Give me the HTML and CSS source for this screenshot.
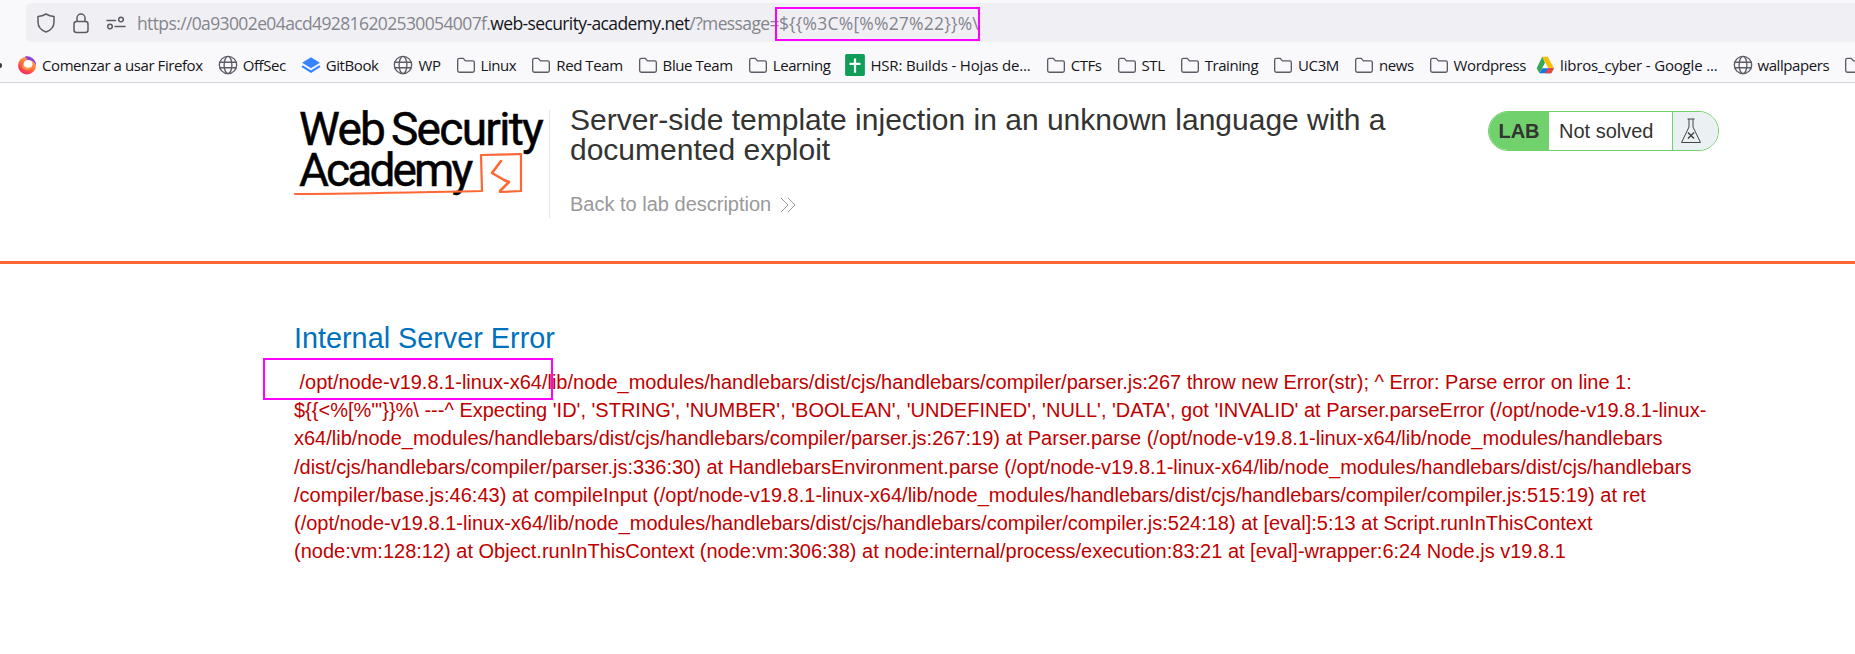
FILE: index.html
```html
<!DOCTYPE html>
<html lang="en">
<head>
    <meta charset="UTF-8">
    <meta name="viewport" content="width=device-width, initial-scale=1.0">
    <title>Server-side template injection</title>
    <link rel="stylesheet" href="styles.css">
</head>
<body>
    <div class="browser">
        <div class="toolbar">
            <div class="urlbar">
                <svg class="url-icon" width="20" height="22" viewBox="0 0 20 22"><path d="M10 2C12.500 3.500 15 4.300 18 4.500V10c0 5-3.300 8.300-8 10C5.300 18.300 2 15 2 10V4.500C5 4.300 7.500 3.500 10 2Z" fill="none" stroke="#5b5b66" stroke-width="1.500" stroke-linejoin="round"/></svg>
                <svg class="url-icon" width="18" height="22" viewBox="0 0 18 22"><path d="M5 9.500V6a4 4 0 0 1 8 0v3.500" fill="none" stroke="#5b5b66" stroke-width="1.500"/><rect x="2" y="9.500" width="14" height="11" rx="2.500" fill="none" stroke="#5b5b66" stroke-width="1.500"/></svg>
                <svg class="url-icon" width="20" height="14" viewBox="0 0 20 14"><g fill="none" stroke="#5b5b66" stroke-width="1.500" stroke-linecap="round"><circle cx="15" cy="3.500" r="2.300"/><circle cx="4" cy="10.500" r="2.300"/><path d="M1 4.500h8.500M9 10.500h10"/></g></svg>
                <div class="url"><span class="url-dim">https://0a93002e04acd492816202530054007f.</span>web-security-academy.net<span class="url-dim">/?message=<span class="url-query">${{%3C%[%%27%22}}%\</span></span></div>
            </div>
        </div>
        <div class="bookmarks">
            <span class="clipped"></span>
            <div class="bookmark"><svg width="20" height="20" viewBox="0 0 20 20"><defs><linearGradient id="fox" x1="0.800" y1="0" x2="0.200" y2="1"><stop offset="0" stop-color="#ffbd4f"/><stop offset="0.500" stop-color="#ff7139"/><stop offset="1" stop-color="#f5156c"/></linearGradient></defs><circle cx="10" cy="10.500" r="9" fill="url(#fox)"/><path d="M8 1.500C13 .5 19 4 19 10.500 17 6 14 4.500 11 5.500Z" fill="#8a3fe0"/><circle cx="11" cy="9.500" r="4.500" fill="#fff"/><path d="M6 9c1 4 6 5 9 2-1 5-9 6-10 0Z" fill="#ff9640"/></svg>Comenzar a usar Firefox</div>
            <div class="bookmark"><svg class="globe" viewBox="0 0 18 18"><use href="#globe"/></svg>OffSec</div>
            <div class="bookmark"><svg width="20" height="20" viewBox="0 0 18 18"><path d="M9 2 17 7l-8 5-8-5Z" fill="#3884ff"/><path d="M1 10l8 5 8-5" fill="none" stroke="#3884ff" stroke-width="2"/></svg>GitBook</div>
            <div class="bookmark"><svg class="globe" viewBox="0 0 18 18"><use href="#globe"/></svg>WP</div>
            <div class="bookmark"><svg class="folder" viewBox="0 0 18 18"><use href="#folder"/></svg>Linux</div>
            <div class="bookmark"><svg class="folder" viewBox="0 0 18 18"><use href="#folder"/></svg>Red Team</div>
            <div class="bookmark"><svg class="folder" viewBox="0 0 18 18"><use href="#folder"/></svg>Blue Team</div>
            <div class="bookmark"><svg class="folder" viewBox="0 0 18 18"><use href="#folder"/></svg>Learning</div>
            <div class="bookmark loose"><svg width="20" height="22" viewBox="0 0 18 20"><rect width="18" height="20" rx="1.500" fill="#0f9d58"/><path d="M8 4h2v4h4v2h-4v7H8v-7H4V8h4Z" fill="#fff"/></svg>HSR: Builds - Hojas de...</div>
            <div class="bookmark"><svg class="folder" viewBox="0 0 18 18"><use href="#folder"/></svg>CTFs</div>
            <div class="bookmark"><svg class="folder" viewBox="0 0 18 18"><use href="#folder"/></svg>STL</div>
            <div class="bookmark"><svg class="folder" viewBox="0 0 18 18"><use href="#folder"/></svg>Training</div>
            <div class="bookmark"><svg class="folder" viewBox="0 0 18 18"><use href="#folder"/></svg>UC3M</div>
            <div class="bookmark"><svg class="folder" viewBox="0 0 18 18"><use href="#folder"/></svg>news</div>
            <div class="bookmark close-next"><svg class="folder" viewBox="0 0 18 18"><use href="#folder"/></svg>Wordpress</div>
            <div class="bookmark loose"><svg width="20" height="20" viewBox="0 0 18 18"><path d="M6.500 1.500h5L17 12h-5Z" fill="#fbbc04"/><path d="M4 16.500h10.500L17 12H6.500Z" fill="#1a73e8"/><path d="M6.500 1.500 1.500 12 4 16.500 9 7Z" fill="#34a853"/><path d="M12 12h5l-2.500 4.500H9Z" fill="#ea4335"/></svg>libros_cyber - Google ...</div>
            <div class="bookmark"><svg class="globe" viewBox="0 0 18 18"><use href="#globe"/></svg>wallpapers</div>
            <div class="bookmark"><svg class="folder" viewBox="0 0 18 18"><use href="#folder"/></svg></div>
        </div>
    </div>

    <header class="lab-header">
        <div class="logo">
            <div class="logo-line logo-web">Web Security</div>
            <div class="logo-line logo-academy">Academy</div>
            <svg class="logo-mark" width="253" height="108" viewBox="0 0 253 108"><g fill="none" stroke="#ff6633" stroke-linejoin="round" stroke-linecap="round"><path d="M-1 84C60 84 130 82 186 81L185 45 225 44 225 81 204 82" stroke-width="2.200"/><path d="M205 51 196 63 208 70 213 72 204 81" stroke-width="2.600"/></g></svg>
        </div>
        <div class="title-block">
            <h2>Server-side template injection in an unknown language with a documented exploit</h2>
            <a class="back-link">Back to lab description <svg width="18" height="18" viewBox="0 0 18 18"><path d="M2 2l7 7-7 7M9 2l7 7-7 7" fill="none" stroke="#999" stroke-width="1"/></svg></a>
        </div>
        <div class="lab-status">
            <span class="lab-tag">LAB</span>
            <span class="lab-state">Not solved</span>
            <span class="lab-icon"><svg width="22" height="28" viewBox="0 0 22 28"><g fill="none" stroke="#444" stroke-width="1"><path d="M7.500 2h7M9 2v8L1.500 25.500h19L13 10V2"/><path d="M8 15.500l6 6M14 15.500l-6 6" stroke-width="1.500"/></g></svg></span>
        </div>
    </header>

    <main class="content">
        <h4>Internal Server Error</h4>
        <p class="error">&nbsp;/opt/node-v19.8.1-linux-x64/lib/node_modules/handlebars/dist/cjs/handlebars/compiler/parser.js:267 throw new Error(str); ^ Error: Parse error on line 1:<br>
        ${{&lt;%[%'"}}%\ ---^ Expecting 'ID', 'STRING', 'NUMBER', 'BOOLEAN', 'UNDEFINED', 'NULL', 'DATA', got 'INVALID' at Parser.parseError (/opt/node-v19.8.1-linux-<br>
        x64/lib/node_modules/handlebars/dist/cjs/handlebars/compiler/parser.js:267:19) at Parser.parse (/opt/node-v19.8.1-linux-x64/lib/node_modules/handlebars<br>
        /dist/cjs/handlebars/compiler/parser.js:336:30) at HandlebarsEnvironment.parse (/opt/node-v19.8.1-linux-x64/lib/node_modules/handlebars/dist/cjs/handlebars<br>
        /compiler/base.js:46:43) at compileInput (/opt/node-v19.8.1-linux-x64/lib/node_modules/handlebars/dist/cjs/handlebars/compiler/compiler.js:515:19) at ret<br>
        (/opt/node-v19.8.1-linux-x64/lib/node_modules/handlebars/dist/cjs/handlebars/compiler/compiler.js:524:18) at [eval]:5:13 at Script.runInThisContext<br>
        (node:vm:128:12) at Object.runInThisContext (node:vm:306:38) at node:internal/process/execution:83:21 at [eval]-wrapper:6:24 Node.js v19.8.1</p>
    </main>

    <!-- annotations drawn on top of the screenshot -->
    <div class="mark mark-url"></div>
    <div class="mark mark-path"></div>

    <svg class="defs" width="0" height="0">
        <symbol id="globe" viewBox="0 0 18 18"><g fill="none" stroke="#5b5b66" stroke-width="1.200"><circle cx="9" cy="9" r="7.800"/><ellipse cx="9" cy="9" rx="3.500" ry="7.800"/><path d="M1.500 6.500h15M1.500 11.500h15"/></g></symbol>
        <symbol id="folder" viewBox="0 0 18 18"><path d="M1.500 4.500c0-1 .6-1.500 1.500-1.500h3.500l2 2.300H15c1 0 1.500.6 1.500 1.500V14c0 1-.6 1.500-1.500 1.500H3c-1 0-1.500-.6-1.500-1.500Z" fill="none" stroke="#5b5b66" stroke-width="1.200"/></symbol>
    </svg>
</body>
</html>
```

FILE: styles.css
```css
* {
    box-sizing: border-box;
}
body {
    font-family: "Liberation Sans", Arial, sans-serif;
    margin: 0;
    padding: 0;
    background-color: #fff;
    position: relative;
    overflow: hidden;
    height: 654px;
}
.defs {
    position: absolute;
}
.browser {
    height: 83px;
    background-color: #f9f9fb;
    border-bottom: 1px solid #d4d4d8;
}
.toolbar {
    height: 44px;
    padding: 3px 0 0 26px;
}
.urlbar {
    height: 39px;
    display: flex;
    align-items: center;
    padding-left: 10px;
    gap: 16px;
    background-color: #f0f0f4;
    border-radius: 5px 0 0 5px;
}
.url {
    font-family: "Open Sans", sans-serif;
    font-size: 17.500px;
    letter-spacing: -0.620px;
    color: #15141a;
    margin-left: -5px;
    white-space: nowrap;
}
.url-dim {
    color: #85858d;
}
.url-query {
    letter-spacing: 0.200px;
}
.bookmarks {
    height: 38px;
    padding: 4px 0 0 0;
    display: flex;
    align-items: center;
    gap: 15px;
    font-family: "Open Sans", sans-serif;
    font-size: 15px;
    letter-spacing: -0.420px;
    color: #15141a;
    white-space: nowrap;
    overflow: hidden;
}
.clipped {
    flex: none;
    width: 2px;
    height: 5px;
    background-color: #3a3a44;
    border-radius: 0 2px 2px 0;
}
.bookmark {
    display: flex;
    align-items: center;
    gap: 5px;
}
.bookmark svg {
    flex: none;
}
.loose {
    letter-spacing: -0.170px;
}
.close-next {
    margin-right: -6px;
}
.globe, .folder {
    width: 20px;
    height: 20px;
}
.lab-header {
    height: 181px;
    border-bottom: 3px solid #ff6633;
    padding: 27px 0 0 296px;
    display: flex;
    align-items: flex-start;
}
.logo {
    position: relative;
    width: 254px;
    height: 108px;
    padding-left: 3px;
    font-family: Roboto, sans-serif;
    font-weight: 400;
    -webkit-text-stroke: 0.500px #000;
    color: #000;
    font-size: 46px;
    line-height: 41px;
    border-right: 1px solid #e6e6e6;
}
.logo-line {
    white-space: nowrap;
}
.logo-web {
    margin-top: -1px;
    letter-spacing: -1.700px;
    word-spacing: -3px;
}
.logo-academy {
    letter-spacing: -2.900px;
}
.logo-mark {
    position: absolute;
    left: 0;
    top: 0;
    overflow: visible;
}
.title-block {
    width: 849px;
    margin-top: -5px;
    padding-left: 20px;
}
.title-block h2 {
    margin: 0;
    font-size: 30px;
    font-weight: normal;
    line-height: 30px;
    color: #333332;
}
.back-link {
    display: flex;
    align-items: center;
    gap: 8px;
    margin-top: 28px;
    font-size: 20px;
    color: #999;
}
.lab-status {
    margin-left: 89px;
    margin-top: 1px;
    width: 231px;
    height: 40px;
    display: flex;
    align-items: stretch;
    border: 1px solid #70d16d;
    border-radius: 20px;
    overflow: hidden;
    font-size: 20px;
    color: #333332;
}
.lab-tag {
    width: 60px;
    background-color: #70d16d;
    font-weight: bold;
    display: flex;
    align-items: center;
    justify-content: center;
}
.lab-state {
    flex: 1;
    display: flex;
    align-items: center;
    padding-left: 10px;
    background-color: #fff;
    border-right: 1px solid #70d16d;
}
.lab-icon {
    width: 45px;
    padding-right: 10px;
    background-color: #ebf0f2;
    display: flex;
    align-items: center;
    justify-content: center;
}
.content {
    padding: 58px 0 0 294px;
}
.content h4 {
    margin: 0;
    font-size: 28.800px;
    font-weight: normal;
    line-height: 32px;
    color: #0071bc;
}
.error {
    margin: 14px 0 0;
    font-size: 20px;
    line-height: 28.200px;
    color: #c00000;
    white-space: nowrap;
}
.mark {
    position: absolute;
    border: 2px solid #ff00ff;
}
.mark-url {
    left: 775px;
    top: 7px;
    width: 205px;
    height: 34px;
}
.mark-path {
    left: 263px;
    top: 358px;
    width: 290px;
    height: 42px;
}
```
